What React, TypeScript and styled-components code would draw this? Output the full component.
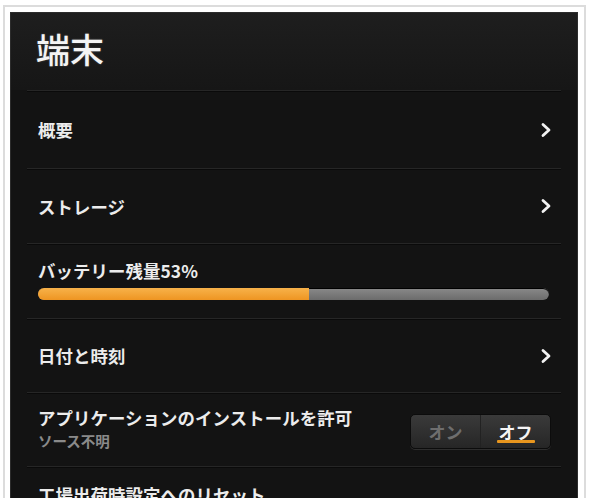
import React from "react";
import styled, { createGlobalStyle } from "styled-components";

const Global = createGlobalStyle`
  html, body { margin: 0; padding: 0; background: #fff; }
  body { font-family: "Noto Sans CJK JP", "Noto Sans", sans-serif; overflow: hidden; }
`;

const Frame = styled.div`
  margin: 5px 3px 0 3px;
  border: 2px solid #dcdcdc;
  border-bottom: none;
  padding: 5px 6px 0 5px;
  height: 493px;
  box-sizing: border-box;
`;

const Panel = styled.div`
  background: #131313;
  height: 100%;
  overflow: hidden;
  border: 1px solid #2c2c2c;
  border-bottom: none;
  box-sizing: border-box;
`;

const Header = styled.div`
  height: 77px;
  padding-left: 25px;
  display: flex;
  align-items: center;
  background: linear-gradient(180deg, #1e1e1e 0%, #161616 100%);
`;

const Title = styled.h1`
  margin: 0;
  font-size: 34px;
  font-weight: 500;
  color: #f4f4f4;
  text-shadow: 0 0 2px rgba(255, 255, 255, 0.25);
  margin-top: -6px;
`;

const List = styled.div`
  margin: 0 16px;
`;

const Row = styled.div<{ $h: number; $top?: boolean }>`
  height: ${(p) => p.$h}px;
  border-top: 1px solid #262626;
  box-shadow: inset 0 1px 0 #0a0a0a;
  padding: ${(p) => (p.$top ? "15px" : "0")} 9px 0 11px;
  display: flex;
  align-items: ${(p) => (p.$top ? "flex-start" : "center")};
  justify-content: space-between;
  box-sizing: border-box;
`;

const Label = styled.div`
  font-size: 17.4px;
  font-weight: 700;
  color: #ececec;
  letter-spacing: 0.1px;
  white-space: nowrap;
`;

const Sub = styled.div`
  font-size: 14.5px;
  font-weight: 700;
  color: #8a8a8a;
`;

const Stack = styled.div`
  display: flex;
  flex-direction: column;
  margin-top: -4px;
`;

const BatteryStack = styled.div`
  display: flex;
  flex-direction: column;
  width: 100%;
  gap: 5px;
  margin-top: -4px;
  margin-right: 3px;
`;

const Track = styled.div`
  height: 12px;
  border-radius: 6px;
  background: linear-gradient(180deg, #8a8a8a 0%, #6c6c6c 100%);
  overflow: hidden;
  display: flex;
  box-shadow: 0 1px 0 #000 inset;
`;

const Fill = styled.div`
  height: 100%;
  background: linear-gradient(180deg, #f7b24a 0%, #ee9522 100%);
`;

const Chevron = () => (
  <svg width="12" height="16" viewBox="0 0 12 16">
    <path d="M3 2.5 L9 8 L3 13.5" fill="none" stroke="#f2f2f2" strokeWidth="2.8" strokeLinecap="round" strokeLinejoin="round" />
  </svg>
);

const Toggle = styled.div`
  display: flex;
  flex: none;
  width: 139px;
  height: 33px;
  border-radius: 5px;
  background: linear-gradient(180deg, #3a3a3a 0%, #262626 100%);
  border: 1px solid #0c0c0c;
  box-shadow: 0 1px 0 #2e2e2e;
  margin-right: 1px;
  margin-top: 4px;
  overflow: hidden;
`;

const Opt = styled.div<{ $on?: boolean }>`
  flex: 1;
  display: flex;
  align-items: center;
  justify-content: center;
  flex-direction: column;
  font-size: 17px;
  font-weight: 700;
  color: ${(p) => (p.$on ? "#f5f5f5" : "#6e6e6e")};
  position: relative;
  & + & { border-left: 1px solid #222; }
`;

const Underline = styled.span`
  position: absolute;
  left: 50%;
  transform: translateX(-50%);
  bottom: 5px;
  width: 38px;
  height: 3px;
  background: #e8961e;
  border-radius: 1px;
`;

export default function App() {
  const pct = 53;
  return (
    <>
      <Global />
      <Frame>
        <Panel>
          <Header>
            <Title>端末</Title>
          </Header>
          <List>
            <Row $h={78}>
              <Label>概要</Label>
              <Chevron />
            </Row>
            <Row $h={75}>
              <Label>ストレージ</Label>
              <Chevron />
            </Row>
            <Row $h={75}>
              <BatteryStack>
                <Label>バッテリー残量{pct}%</Label>
                <Track>
                  <Fill style={{ width: `${pct}%` }} />
                </Track>
              </BatteryStack>
            </Row>
            <Row $h={74}>
              <Label>日付と時刻</Label>
              <Chevron />
            </Row>
            <Row $h={74}>
              <Stack>
                <Label>アプリケーションのインストールを許可</Label>
                <Sub>ソース不明</Sub>
              </Stack>
              <Toggle>
                <Opt>オン</Opt>
                <Opt $on>
                  オフ
                  <Underline />
                </Opt>
              </Toggle>
            </Row>
            <Row $h={74} $top>
              <Label>工場出荷時設定へのリセット</Label>
            </Row>
          </List>
        </Panel>
      </Frame>
    </>
  );
}
